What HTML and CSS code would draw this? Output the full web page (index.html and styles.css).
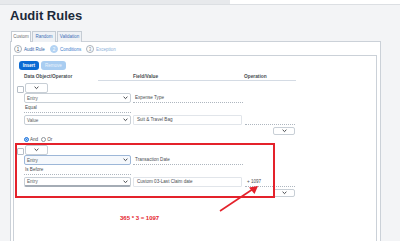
FILE: index.html
```html
<!DOCTYPE html>
<html lang="en">
<head>
  <meta charset="UTF-8">
  <meta name="viewport" content="width=device-width, initial-scale=1.0">
  <title>Audit Rules</title>
  <link rel="stylesheet" href="styles.css">
</head>
<body>

  <div class="topbar"></div>

  <div class="page">
    <h1>Audit Rules</h1>

    <div class="tabs">
      <div class="tab active tab-custom">Custom</div>
      <div class="tab tab-random">Random</div>
      <div class="tab tab-validation">Validation</div>
    </div>

    <div class="panel">
      <div class="steps">
        <div class="step done"><span class="dot">1</span>Audit Rule</div>
        <div class="step current"><span class="dot">2</span>Conditions</div>
        <div class="step next"><span class="dot">3</span>Exception</div>
      </div>

      <div class="rules-box">
        <div class="toolbar">
          <button class="btn btn-insert">Insert</button>
          <button class="btn btn-remove">Remove</button>
        </div>

        <div class="head-row">
          <span>Data Object/Operator</span>
          <span>Field/Value</span>
          <span class="op-head">Operation</span>
        </div>

        <!-- condition group 1 -->
        <div class="group-head">
          <span class="check"></span>
          <div class="select mini"><span></span><svg class="chev" viewBox="0 0 6 4"><polyline points="0.7,0.8 3,3 5.3,0.8"/></svg></div>
        </div>
        <div class="cond">
          <div class="select"><span>Entry</span><svg class="chev" viewBox="0 0 6 4"><polyline points="0.7,0.8 3,3 5.3,0.8"/></svg></div>
          <div class="field">Expense Type</div>
          <div></div>

          <div class="field operator">Equal</div>
          <div></div>
          <div></div>

          <div class="select gap-top"><span>Value</span><svg class="chev" viewBox="0 0 6 4"><polyline points="0.7,0.8 3,3 5.3,0.8"/></svg></div>
          <div class="input gap-top">Suit &amp; Travel Bag</div>
          <div class="field gap-top"></div>
        </div>
        <div class="group-foot">
          <div class="select small"><span></span><svg class="chev" viewBox="0 0 6 4"><polyline points="0.7,0.8 3,3 5.3,0.8"/></svg></div>
        </div>

        <div class="logic">
          <span class="radio on"></span><span class="radio-label">And</span>
          <span class="radio"></span><span class="radio-label">Or</span>
        </div>

        <!-- condition group 2 -->
        <div class="group-head">
          <span class="check"></span>
          <div class="select mini"><span></span><svg class="chev" viewBox="0 0 6 4"><polyline points="0.7,0.8 3,3 5.3,0.8"/></svg></div>
        </div>
        <div class="cond">
          <div class="select focused"><span>Entry</span><svg class="chev" viewBox="0 0 6 4"><polyline points="0.7,0.8 3,3 5.3,0.8"/></svg></div>
          <div class="field">Transaction Date</div>
          <div></div>

          <div class="field operator">Is Before</div>
          <div></div>
          <div></div>

          <div class="select gap-top bottom-line"><span>Entry</span><svg class="chev" viewBox="0 0 6 4"><polyline points="0.7,0.8 3,3 5.3,0.8"/></svg></div>
          <div class="input gap-top">Custom 03-Last Claim date</div>
          <div class="field gap-top">+ 1097</div>
        </div>
        <div class="group-foot">
          <div class="select small"><span></span><svg class="chev" viewBox="0 0 6 4"><polyline points="0.7,0.8 3,3 5.3,0.8"/></svg></div>
        </div>
      </div>
    </div>
  </div>

  <!-- red annotation drawn over the screenshot -->
  <svg class="markup" viewBox="0 0 400 241">
    <rect x="16" y="144" width="258" height="53" />
    <line x1="220" y1="211" x2="253" y2="189" />
    <polygon points="258,186 249,187.5 254.5,194" />
  </svg>
  <div class="note">365 * 3 = 1097</div>

</body>
</html>
```

FILE: styles.css
```css
body {
  font-family: 'Liberation Sans', Arial, sans-serif;
  background-color: #f3f4f6;
  margin: 0;
  padding: 0;
  height: 241px;
  overflow: hidden;
  position: relative;
  color: #32363a;
}
.topbar {
  height: 4px;
  border-bottom: 1px solid #dcdfe3;
  background: linear-gradient(to right, #e7e9ec 230px, #fff 230px);
}
.page {
  padding-left: 10px;
}
h1 {
  margin: 0;
  padding-top: 4px;
  font-size: 13px;
  line-height: 14px;
  font-weight: 700;
  color: #1c2a3b;
  margin-bottom: 8px;
}
.tabs {
  display: flex;
  gap: 1px;
  margin-left: 1px;
  height: 10px;
}
.tab {
  box-sizing: border-box;
  height: 11px;
  border: 1px solid #c5ccd4;
  border-bottom: none;
  background-color: #eef1f5;
  color: #3a6eb5;
  font-size: 4.5px;
  line-height: 9px;
  text-align: center;
  position: relative;
  z-index: 1;
}
.tab.active {
  background-color: #fff;
  color: #6a6d70;
}
.tab-custom { width: 20px; }
.tab-random { width: 24px; }
.tab-validation { width: 25px; }
.panel {
  box-sizing: border-box;
  width: 371px;
  height: 200px;
  background-color: #fff;
  border: 1px solid #cbd1d8;
  border-bottom: none;
  padding: 3px 2px 0 2px;
}
.steps {
  display: flex;
  height: 8px;
  margin-left: 1px;
  margin-bottom: 2px;
}
.step {
  width: 36px;
  display: flex;
  align-items: center;
  font-size: 4.5px;
  color: #2f64a8;
}
.dot {
  box-sizing: border-box;
  width: 8px;
  height: 8px;
  border-radius: 50%;
  border: 1px solid #a9b1ba;
  display: flex;
  align-items: center;
  justify-content: center;
  margin-right: 2px;
  font-size: 4.5px;
  color: #4a4d50;
}
.step.current .dot {
  background-color: #b3d3f3;
  border-color: #b3d3f3;
  color: #fff;
}
.step.current { color: #3f80cc; }
.step.next { color: #8cb0d8; }
.step.next .dot { color: #8a8f95; }
.rules-box {
  box-sizing: border-box;
  height: 186px;
  border: 1px solid #cbd1d8;
  border-bottom: none;
  margin-right: 1px;
}
.toolbar {
  display: flex;
  gap: 2px;
  padding: 5px 0 0 5px;
}
.btn {
  height: 9px;
  border: none;
  border-radius: 3px;
  padding: 0;
  font-family: inherit;
  font-size: 4.5px;
  color: #fff;
}
.btn-insert {
  width: 20px;
  background-color: #0b6bd3;
  font-weight: 700;
}
.btn-remove {
  width: 25px;
  background-color: #a9cdf1;
  color: #eaf3fc;
}
.head-row {
  display: grid;
  grid-template-columns: 107px 110px 50px;
  column-gap: 2px;
  height: 8px;
  margin-top: 3px;
  padding-left: 10px;
  font-size: 4.8px;
  font-weight: 700;
  line-height: 8px;
  color: #4a4e52;
  background: linear-gradient(#d4dbe4, #d4dbe4) no-repeat 84px 100% / 198px 1.5px;
}
.op-head {
  padding-left: 0;
  margin-left: -1px;
}
.group-head {
  display: flex;
  align-items: center;
  padding-left: 3px;
  margin-top: 2px;
}
.check {
  box-sizing: border-box;
  width: 7px;
  height: 7px;
  border: 1px solid #b6bec7;
  border-radius: 1px;
  margin-right: 1px;
  margin-top: 2px;
}
.select {
  box-sizing: border-box;
  height: 10px;
  border: 1px solid #c8cfd6;
  border-radius: 2px;
  background-color: #fff;
  display: flex;
  align-items: center;
  justify-content: space-between;
  padding: 0 2px;
  font-size: 4.6px;
  color: #5a5e62;
}
.select.mini {
  width: 23px;
  justify-content: flex-end;
  padding-right: 8px;
}
.select.small {
  width: 22px;
  height: 8px;
  justify-content: flex-end;
  padding-right: 7px;
}
.select.focused {
  border-color: #9db7d8;
  background-color: #f5f8fc;
}
.select.bottom-line {
  border-bottom: 2px solid #a4acb5;
}
.chev {
  width: 5px;
  height: 3.5px;
  fill: none;
  stroke: #32363a;
  stroke-width: 1.1;
}
.cond {
  display: grid;
  grid-template-columns: 107px 110px 50px;
  column-gap: 2px;
  padding-left: 10px;
}
.field {
  box-sizing: border-box;
  height: 10px;
  border-bottom: 1px dotted #aeb6bf;
  font-size: 4.6px;
  line-height: 9px;
  padding-left: 2px;
  color: #4a4e52;
}
.operator {
  height: 10px;
  padding-left: 1px;
}
.input {
  box-sizing: border-box;
  height: 10px;
  width: 109px;
  border: 1px solid #e1e5ea;
  border-radius: 1px;
  font-size: 4.6px;
  line-height: 8px;
  padding-left: 3px;
  color: #4a4e52;
}
.gap-top {
  margin-top: 2px;
}
.group-foot {
  display: flex;
  justify-content: flex-end;
  width: 281px;
  margin-top: 2px;
}
.logic {
  display: flex;
  align-items: center;
  height: 7px;
  padding-left: 10px;
  margin-top: 1px;
  margin-bottom: 2px;
  font-size: 4.6px;
  color: #4a4e52;
}
.radio {
  box-sizing: border-box;
  width: 5px;
  height: 5px;
  border-radius: 50%;
  border: 1px solid #8e959c;
  margin-right: 1px;
}
.radio.on {
  border: 1.5px solid #2b7de0;
  background-color: #2b7de0;
  box-shadow: inset 0 0 0 0.6px #fff;
}
.radio-label {
  margin-right: 3px;
}
.markup {
  position: absolute;
  left: 0;
  top: 0;
  width: 400px;
  height: 241px;
  pointer-events: none;
}
.markup rect {
  fill: none;
  stroke: #e4222b;
  stroke-width: 2;
}
.markup line {
  stroke: #e4222b;
  stroke-width: 1.6;
}
.markup polygon {
  fill: #e4222b;
}
.note {
  position: absolute;
  left: 120px;
  top: 215px;
  font-size: 6px;
  font-weight: 700;
  color: #e4222b;
}
```
